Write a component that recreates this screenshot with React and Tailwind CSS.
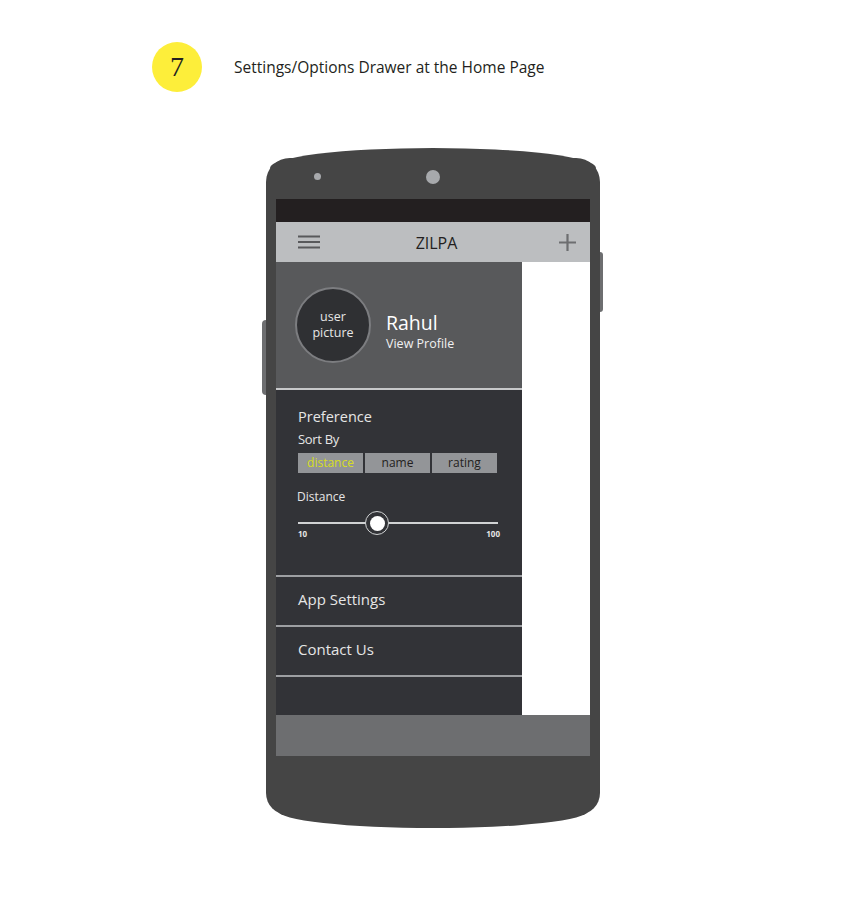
import React from 'react';

const font = { fontFamily: '"Open Sans", "Noto Sans", sans-serif' };

const sortOptions = [
  { label: 'distance', active: true },
  { label: 'name' },
  { label: 'rating' },
];

const Header = () => (
  <div className="flex items-center h-[50px] mt-[42px] ml-[152px]">
    <div className="w-[50px] h-[50px] rounded-full bg-[#fdee3a] flex items-center justify-center">
      <span className="text-[28px] text-[#231f20] leading-none" style={{ fontFamily: '"Liberation Serif", serif' }}>
        7
      </span>
    </div>
    <span className="ml-[32px] text-[15.5px] text-[#231f20] mt-[2px]">
      Settings/Options Drawer at the Home Page
    </span>
  </div>
);

const Toolbar = () => (
  <div className="h-10 bg-[#bcbec0] flex items-center justify-between pl-[22px] pr-[14px]">
    <svg width="22" height="14" viewBox="0 0 22 14">
      <path d="M0 1.5h22M0 7h22M0 12.5h22" stroke="#58595b" strokeWidth="2" />
    </svg>
    <span className="text-[16px] text-[#231f20] mr-[6px] mt-[2px]">ZILPA</span>
    <svg width="17" height="17" viewBox="0 0 17 17">
      <path d="M8.5 0v17M0 8.5h17" stroke="#6d6e70" strokeWidth="2.2" />
    </svg>
  </div>
);

const Profile = () => (
  <div className="h-[128px] bg-[#58595b] flex items-center pl-[19px] border-b-2 border-[#c7c8ca]">
    <div className="w-[76px] h-[76px] rounded-full bg-[#2f3033] border-2 border-[#7c7d80] flex flex-col items-center justify-center text-[#e6e6e6] text-[12.5px] leading-[16px]">
      <span>user</span>
      <span>picture</span>
    </div>
    <div className="ml-[15px] mt-[12px] flex flex-col text-white">
      <span className="text-[19.5px] leading-[26px]">Rahul</span>
      <span className="text-[12.5px] leading-[16px] text-[#f1f1f2]">View Profile</span>
    </div>
  </div>
);

const Preference = () => (
  <div className="h-[187px] pt-[16px] px-[22px] border-b-2 border-[#9d9fa2] text-[#e6e6e6]">
    <div className="text-[14.5px] leading-[22px]">Preference</div>
    <div className="text-[13px] leading-[22px] tracking-[-0.3px]">Sort By</div>
    <div className="flex gap-[2px] mt-[3px]">
      {sortOptions.map((o) => (
        <div
          key={o.label}
          className={`w-[65px] h-5 bg-[#939598] flex items-center justify-center text-[12px] ${
            o.active ? 'text-[#d7df23]' : 'text-[#231f20]'
          }`}
        >
          {o.label}
        </div>
      ))}
    </div>
    <div className="text-[12px] leading-[16px] mt-[16px] -ml-px">Distance</div>
    <div className="relative h-6 mt-[6px] w-[200px]">
      <div className="absolute left-0 right-0 top-[11px] h-[2px] bg-[#d1d3d4]" />
      <div className="absolute left-[67px] top-0 w-6 h-6 rounded-full border-[1.5px] border-[#d1d3d4] bg-[#323337] flex items-center justify-center">
        <div className="w-[15px] h-[15px] rounded-full bg-white" />
      </div>
    </div>
    <div className="flex justify-between w-[202px] text-[8px] font-bold leading-[10px] -mt-[6px]">
      <span>10</span>
      <span>100</span>
    </div>
  </div>
);

const MenuItem = ({ label }) => (
  <div className="h-[50px] border-b-2 border-[#9d9fa2] flex items-center pl-[22px] pb-[4px] text-[15px] text-[#e6e6e6]">
    {label}
  </div>
);

const Drawer = () => (
  <div className="w-[246px] bg-[#323337] flex flex-col">
    <Profile />
    <Preference />
    <MenuItem label="App Settings" />
    <MenuItem label="Contact Us" />
  </div>
);

const Phone = () => (
  <div className="relative ml-[266px] mt-[66px] w-[334px]">
    {/* curved top and bottom of the body */}
    <div className="absolute left-[4px] right-[4px] -top-[10px] h-10 rounded-[50%] bg-[#454545]" />
    <div className="absolute left-[12px] right-[12px] top-[636px] h-[34px] rounded-[50%] bg-[#454545]" />
    {/* side buttons */}
    <div className="absolute -left-[4px] top-[162px] w-[4px] h-[75px] bg-[#6d6e70] rounded-l-sm" />
    <div className="absolute -right-[3px] top-[94px] w-[3px] h-[60px] bg-[#6d6e70] rounded-r-sm" />

    <div className="relative bg-[#454545] rounded-t-[24px] rounded-b-[22px] px-[10px] pb-[59px]">
      <div className="h-[41px] flex items-start pt-[12px]">
        <div className="w-[7px] h-[7px] rounded-full bg-[#a7a9ac] ml-[38px] mt-[3px]" />
        <div className="w-[14px] h-[14px] rounded-full bg-[#a7a9ac] ml-[105px]" />
      </div>
      <div className="h-[23px] bg-[#231f20]" />
      <Toolbar />
      <div className="flex h-[453px] bg-white">
        <Drawer />
      </div>
      <div className="h-[41px] bg-[#6d6e70]" />
    </div>
  </div>
);

export default function App() {
  return (
    <div className="w-[864px] h-[912px] bg-white overflow-hidden" style={font}>
      <Header />
      <Phone />
    </div>
  );
}
